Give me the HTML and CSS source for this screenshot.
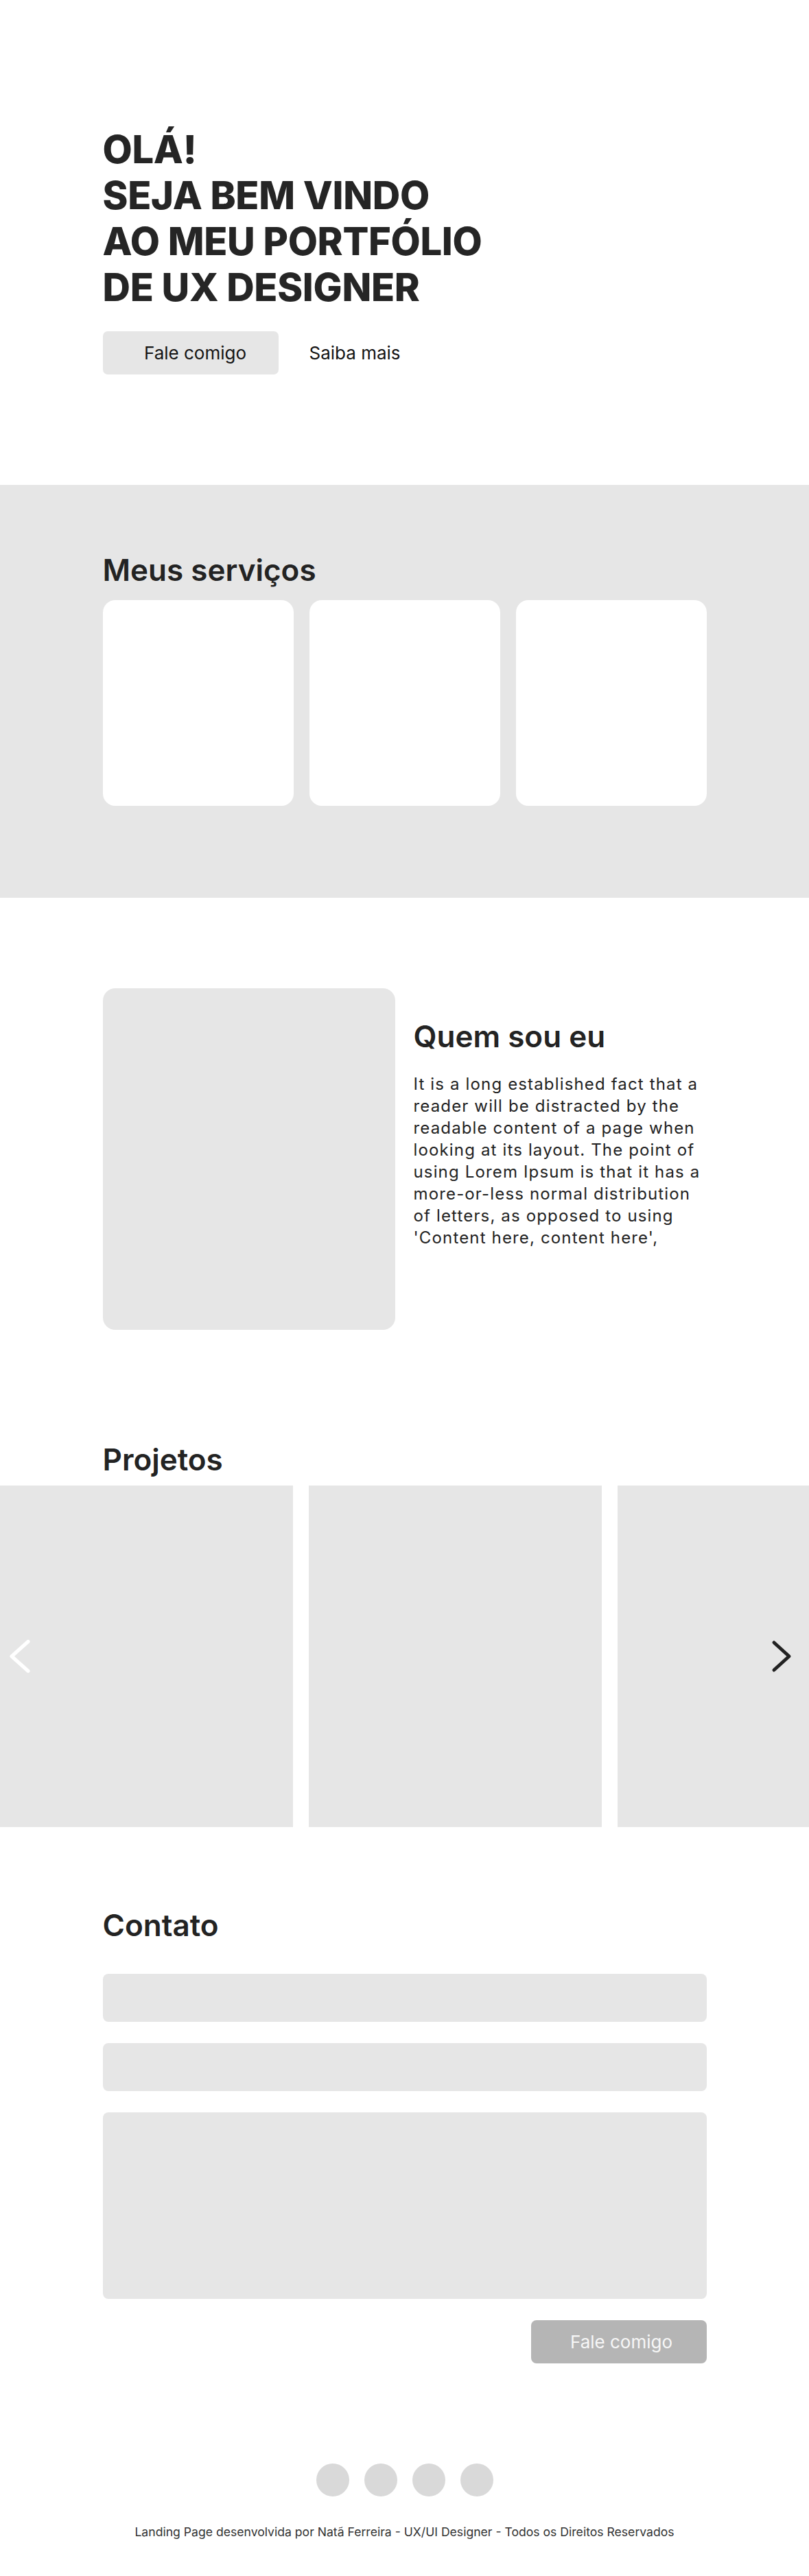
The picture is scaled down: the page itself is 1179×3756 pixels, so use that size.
FILE: index.html
```html
<!DOCTYPE html>
<html lang="pt-BR">
<head>
<meta charset="utf-8">
<title>Portfólio UX Designer</title>
<link rel="stylesheet" href="styles.css">
</head>
<body>
<section class="hero">
  <div class="container">
    <h1 class="hero-title">OLÁ!<br>SEJA BEM VINDO<br>AO MEU PORTFÓLIO<br>DE UX DESIGNER</h1>
    <div class="hero-actions">
      <a class="btn btn-light" href="#contato">Fale comigo</a>
      <a class="link" href="#sobre">Saiba mais</a>
    </div>
  </div>
</section>

<section class="services">
  <div class="container">
    <h2 class="section-title">Meus serviços</h2>
    <div class="service-grid">
      <div class="service-card"></div>
      <div class="service-card"></div>
      <div class="service-card"></div>
    </div>
  </div>
</section>

<section class="about" id="sobre">
  <div class="container about-grid">
    <div class="about-photo"></div>
    <div class="about-text">
      <h2 class="section-title">Quem sou eu</h2>
      <p>It is a long established fact that a reader will be distracted by the readable content of a page when looking at its layout. The point of using Lorem Ipsum is that it has a more-or-less normal distribution of letters, as opposed to using 'Content here, content here',</p>
    </div>
  </div>
</section>

<section class="projects">
  <div class="container">
    <h2 class="section-title">Projetos</h2>
  </div>
  <div class="carousel">
    <div class="track">
      <div class="project-card"></div>
      <div class="project-card"></div>
      <div class="project-card"></div>
    </div>
    <button class="arrow arrow-left" aria-label="Anterior">
      <svg width="34" height="54" viewBox="0 0 34 54"><path d="M29 5.5 L5 27 L29 48.5" fill="none" stroke="#ffffff" stroke-width="5.2" stroke-linecap="round" stroke-linejoin="round"/></svg>
    </button>
    <button class="arrow arrow-right" aria-label="Próximo">
      <svg width="34" height="54" viewBox="0 0 34 54"><path d="M6 7 L28 27 L6 47" fill="none" stroke="#222222" stroke-width="5" stroke-linecap="round" stroke-linejoin="round"/></svg>
    </button>
  </div>
</section>

<section class="contact" id="contato">
  <div class="container">
    <h2 class="section-title">Contato</h2>
    <form class="contact-form">
      <input class="field" type="text" aria-label="Nome">
      <input class="field" type="email" aria-label="E-mail">
      <textarea class="field field-area" aria-label="Mensagem"></textarea>
      <div class="form-actions">
        <button class="btn btn-dark" type="button">Fale comigo</button>
      </div>
    </form>
  </div>
</section>

<footer class="footer">
  <div class="socials">
    <span class="social"></span>
    <span class="social"></span>
    <span class="social"></span>
    <span class="social"></span>
  </div>
  <p class="copyright">Landing Page desenvolvida por Natã Ferreira - UX/UI Designer - Todos os Direitos Reservados</p>
</footer>
</body>
</html>
```

FILE: styles.css
```css
* { box-sizing: border-box; }

body {
  margin: 0;
  font-family: Inter, "Noto Sans", "Liberation Sans", sans-serif;
  color: #232323;
  background: #ffffff;
}

.container {
  width: 880px;
  margin: 0 auto;
}

/* HERO */
.hero {
  padding: 185px 0 161px;
}
.hero-title {
  margin: 0;
  font-size: 56px;
  line-height: 67px;
  font-weight: 800;
  letter-spacing: -0.3px;
  color: #252525;
}
.hero-actions {
  margin-top: 30px;
  display: flex;
  align-items: center;
  gap: 45px;
}
.btn {
  display: inline-flex;
  align-items: center;
  justify-content: center;
  width: 256px;
  height: 63px;
  padding-left: 14px;
  border: none;
  border-radius: 7px;
  font-family: inherit;
  font-size: 26px;
  font-weight: 400;
  text-decoration: none;
  cursor: pointer;
}
.btn-light {
  background: #e6e6e6;
  color: #141414;
}
.btn-dark {
  background: #b5b5b5;
  color: #f7f7f7;
  border-radius: 8px;
}
.link {
  font-size: 26px;
  color: #141414;
  text-decoration: none;
}

/* SECTION TITLES */
.section-title {
  margin: 0;
  font-size: 44px;
  line-height: 53px;
  font-weight: 600;
  color: #232323;
}

/* SERVICES */
.services {
  background: #e6e6e6;
  padding: 98px 0 134px;
}
.services .section-title {
  margin-bottom: 17px;
}
.service-grid {
  display: grid;
  grid-template-columns: repeat(3, 1fr);
  gap: 23px;
}
.service-card {
  height: 300px;
  background: #ffffff;
  border-radius: 18px;
}

/* ABOUT */
.about {
  padding-top: 132px;
}
.about-grid {
  display: grid;
  grid-template-columns: 426px 1fr;
  gap: 27px;
  align-items: start;
}
.about-photo {
  height: 498px;
  background: #e6e6e6;
  border-radius: 18px;
}
.about-text {
  padding-top: 44px;
}
.about-text .section-title {
  margin-bottom: 27px;
}
.about-text p {
  margin: 0;
  font-size: 24px;
  line-height: 32px;
  letter-spacing: 1.15px;
  color: #222222;
}

/* PROJECTS */
.projects {
  padding-top: 163px;
}
.projects .section-title {
  margin-bottom: 11px;
}
.carousel {
  position: relative;
  overflow: hidden;
}
.track {
  display: flex;
  gap: 23px;
}
.project-card {
  flex: 0 0 427px;
  height: 498px;
  background: #e6e6e6;
}
.arrow {
  position: absolute;
  top: 50%;
  transform: translateY(-50%);
  width: 34px;
  height: 54px;
  padding: 0;
  border: none;
  background: none;
  cursor: pointer;
  display: block;
}
.arrow svg { display: block; }
.arrow-left { left: 12px; }
.arrow-right { right: 23px; }

/* CONTACT */
.contact {
  padding-top: 117px;
}
.contact .section-title {
  margin-bottom: 44px;
}
.contact-form {
  display: flex;
  flex-direction: column;
  gap: 31px;
}
.field {
  display: block;
  width: 100%;
  height: 70px;
  border: none;
  border-radius: 8px;
  background: #e6e6e6;
  font-family: inherit;
  font-size: 20px;
  padding: 0 20px;
  resize: none;
  outline: none;
}
.field-area {
  height: 272px;
  padding: 20px;
}
.form-actions {
  display: flex;
  justify-content: flex-end;
}

/* FOOTER */
.footer {
  padding: 146px 0 50px;
  text-align: center;
}
.socials {
  display: flex;
  justify-content: center;
  gap: 22px;
}
.social {
  width: 48px;
  height: 48px;
  border-radius: 50%;
  background: #d9d9d9;
}
.copyright {
  margin: 41px 0 0;
  font-size: 17.6px;
  line-height: 22px;
  color: #333333;
}
```
